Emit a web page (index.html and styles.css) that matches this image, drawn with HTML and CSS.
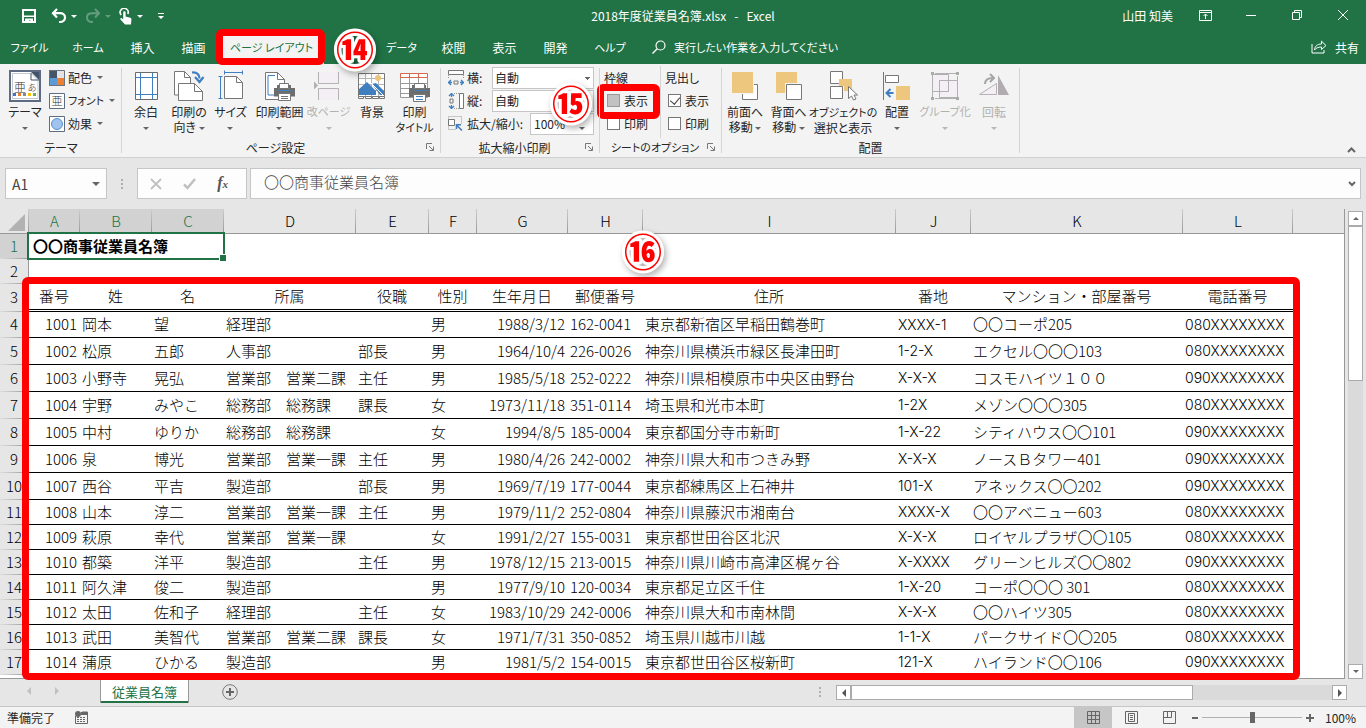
FILE: index.html
```html
<!DOCTYPE html>
<html lang="ja">
<head>
<meta charset="utf-8">
<title>2018年度従業員名簿.xlsx - Excel</title>
<link rel="stylesheet" href="styles.css">
</head>
<body>
<header class="app-head">
  <div class="titlebar">
    <div class="quick">
      <button class="qbtn" aria-label="上書き保存"><svg width="16" height="16" viewBox="0 0 16 16"><path d="M2 2h12v12H2z" fill="none" stroke="#fff" stroke-width="2"/><path d="M1 7.500h14v1.500H1zM4 10.500h8V15H9.500v-2.500H8V15H4z" fill="#fff"/></svg></button>
      <button class="qbtn" aria-label="元に戻す"><svg width="16" height="16" viewBox="0 0 16 16"><path d="M6 1L2 5.200 6 9.500M2.500 5.200H9c3 0 5 1.800 5 4.300S12 14 9 14H8" fill="none" stroke="#fff" stroke-width="2.200"/></svg></button>
      <i class="caret light"></i>
      <button class="qbtn dim" aria-label="やり直し"><svg width="16" height="16" viewBox="0 0 16 16"><path d="M10 1l4 4.200L10 9.500M13.500 5.200H7c-3 0-5 1.800-5 4.300S4 14 7 14h1" fill="none" stroke="#fff" stroke-width="2"/></svg></button>
      <i class="caret light dim"></i>
      <button class="qbtn" aria-label="タッチ/マウス モードの切り替え"><svg width="14" height="17" viewBox="0 0 14 17"><path d="M2.200 7A4 4 0 1 1 8.800 6" fill="none" stroke="#fff" stroke-width="1.600"/><path d="M4.200 4.500c0-1.800 2.400-1.800 2.400 0v4l4.600 1.300c1 .3 1.300 1 1.200 2L12 16.500H6L1.500 11.500c-.8-1 .4-2 1.300-1.300l1.400 1.200z" fill="#fff"/></svg></button>
      <i class="caret light"></i>
      <button class="qmore" aria-label="クイック アクセス ツール バーのユーザー設定"><svg width="6" height="7" viewBox="0 0 6 7"><path d="M0 0h6v1H0zM0 3h6L3 6z" fill="#fff"/></svg></button>
    </div>
    <div class="doc-title">2018年度従業員名簿.xlsx&nbsp;&nbsp; -&nbsp;&nbsp; Excel</div>
    <div class="window-side">
      <span class="user">山田 知美</span>
      <button class="wbtn" aria-label="リボンの表示オプション"><svg width="13" height="11" viewBox="0 0 13 11"><path d="M.5.5h12v10H.5zM1 2.500h11M6.500 9V4M4.500 6l2-2 2 2" fill="none" stroke="#fff"/></svg></button>
      <button class="wbtn" aria-label="最小化"><svg width="10" height="10" viewBox="0 0 10 10"><path d="M0 5.500h10" stroke="#fff"/></svg></button>
      <button class="wbtn" aria-label="元のサイズに戻す"><svg width="10" height="10" viewBox="0 0 10 10"><path d="M.5 2.500h7v7h-7zM2.500 2V.5h7v7H8" fill="none" stroke="#fff"/></svg></button>
      <button class="wbtn" aria-label="閉じる"><svg width="10" height="10" viewBox="0 0 10 10"><path d="M0 0l10 10M10 0L0 10" stroke="#fff"/></svg></button>
    </div>
  </div>
  <nav class="tabs">
    <button class="tab file kana">ファイル</button>
    <button class="tab home kana">ホーム</button>
    <button class="tab">挿入</button>
    <button class="tab">描画</button>
    <button class="tab active kana">ページ レイアウト</button>
    <button class="tab step-host" aria-label="数式"><svg class="step" width="52" height="52" viewBox="0 0 52 52"><path d="M21 12h10l-5 5zM21 40h10l-5-5z" fill="#1b5c38"/><text x="26" y="26" class="step-num">⑭</text></svg></button>
    <button class="tab data kana">データ</button>
    <button class="tab">校閲</button>
    <button class="tab">表示</button>
    <button class="tab">開発</button>
    <button class="tab home kana">ヘルプ</button>
    <button class="tab tell kana"><svg width="14" height="14" viewBox="0 0 14 14"><circle cx="8.500" cy="5.500" r="4.500" fill="none" stroke="#fff" stroke-width="1.200"/><path d="M5.200 8.800L.5 13.500" stroke="#fff" stroke-width="1.400"/></svg>実行したい作業を入力してください</button>
    <button class="tab share"><svg width="16" height="14" viewBox="0 0 16 14"><path d="M1 4v9h12v-3" fill="none" stroke="#fff"/><path d="M3.500 10c.3-3.500 2.500-6 7-6V1.200L15 5.500 10.500 9.500V7C7 7 5 8 3.500 10z" fill="none" stroke="#fff"/></svg>共有</button>
  </nav>
</header>

<section class="ribbon">
  <div class="group g-theme">
    <div class="tools">
      <button class="tool w44"><svg class="ico" width="32" height="36" viewBox="9 68 32 36"><path d="M10 71h30v30H10z" fill="#fff" stroke="#5d6c83" stroke-width="2"/><path d="M12.500 73.500H31l7 7v18H12.500z" fill="#fff" stroke="#c3c9d1"/><path d="M31 72h8v8z" fill="#44546a"/><path d="M31 73v7h8" fill="none" stroke="#44546a"/><text x="20" y="92" class="ico-a">亜</text><text x="32" y="91" class="ico-b">あ</text><path d="M13 93h3v3h-3z" fill="#4472c4"/><path d="M18 93h3v3h-3z" fill="#ed7d31"/><path d="M23 93h3v3h-3z" fill="#8a8a8a"/><path d="M28 93h3v3h-3z" fill="#ffc000"/><path d="M33 93h3v3h-3z" fill="#70ad47"/></svg><span>テーマ<br><i class="caret"></i></span></button>
      <div class="stack">
        <button class="mini"><svg width="16" height="16" viewBox="0 0 16 16"><path d="M0 0h8v8H0z" fill="#44546a"/><path d="M8 0h8v8H8z" fill="#e7e2e2"/><path d="M0 8h8v8H0z" fill="#5b9bd5"/><path d="M8 8h8v8H8z" fill="#ed7d31"/><path d="M.5.5h15v15H.5z" fill="none" stroke="#6a7480"/></svg>配色<i class="caret"></i></button>
        <button class="mini kana"><svg width="16" height="16" viewBox="0 0 16 16"><path d="M.5.5h15v15H.5z" fill="#fff" stroke="#5d6c83"/><text x="8" y="12" class="ico-c">亜</text></svg>フォント<i class="caret"></i></button>
        <button class="mini"><svg width="16" height="16" viewBox="0 0 16 16"><path d="M.5.5h15v15H.5z" fill="#fff" stroke="#5d6c83"/><circle cx="8" cy="8" r="5.500" fill="#9dc3ee" stroke="#5b8fd0"/></svg>効果<i class="caret"></i></button>
      </div>
    </div>
    <div class="group-name"><span>テーマ</span></div>
  </div>

  <div class="group g-page">
    <div class="tools">
      <button class="tool w42"><svg class="ico" width="32" height="36" viewBox="130 68 32 36"><path d="M135.500 72.500h22v27h-22z" fill="#fff" stroke="#6b6b6b"/><path d="M140.500 73v26M152.500 73v26M136 77.500h21M136 94.500h21" stroke="#3f7fc0"/></svg><span>余白<br><i class="caret"></i></span></button>
      <button class="tool w44"><svg class="ico" width="32" height="36" viewBox="173 68 32 36"><path d="M174.500 71.500h10l6 6V95h-16z" fill="#fff" stroke="#777"/><path d="M184.500 71.500v6h6" fill="none" stroke="#777"/><path d="M178.500 83.500h16l8 8v9h-24z" fill="#fff" stroke="#777"/><path d="M194.500 83.500v8h8" fill="none" stroke="#777"/><path d="M192 72.500c5-.5 7.500 2 7.500 6" fill="none" stroke="#3f7fc0" stroke-width="2.200"/><path d="M195 77l4.500 5 4-5" fill="none" stroke="#3f7fc0" stroke-width="2.200"/></svg><span>印刷の<br>向き <i class="caret"></i></span></button>
      <button class="tool w39"><svg class="ico" width="32" height="36" viewBox="215 68 32 36"><path d="M224.500 72.500h18M224.500 70.500v4M242.500 70.500v4M220.500 76.500v22M218.500 76.500h4M218.500 98.500h4" stroke="#3f7fc0"/><path d="M224.500 76.500h12l6 6v16h-18z" fill="#fff" stroke="#777"/><path d="M236.500 76.500v6h6" fill="none" stroke="#777"/></svg><span>サイズ<br><i class="caret"></i></span></button>
      <button class="tool w59"><svg class="ico" width="32" height="36" viewBox="263 68 32 36"><path d="M264.500 72.500h12l7 7v20h-19z" fill="#fff" stroke="#777"/><path d="M276.500 72.500v7h7" fill="none" stroke="#777"/><path d="M274 75.500h-7v19.500h6" fill="none" stroke="#3f7fc0"/><path d="M273 88h21v8.500h-21z" fill="#6d6d6d"/><path d="M276 85h14v5h-14z" fill="#6d6d6d"/><path d="M278.500 83.500h9v5h-9zM277.500 93.500h12v7h-12z" fill="#fff" stroke="#777"/><path d="M280 96.500h7M280 98.500h7" stroke="#777"/><path d="M276 90.500h14" stroke="#3f7fc0"/></svg><span>印刷範囲<br><i class="caret"></i></span></button>
      <button class="tool w39" disabled><svg class="ico" width="32" height="36" viewBox="312 68 32 36"><path d="M317.500 72v11.500h20V72M317.500 100V88.500h20V100" fill="#f4eef5" stroke="#b5b1b5"/><path d="M313 81.500v8l4-4z" fill="#b0b0b0"/></svg><span class="kana">改ページ<br><i class="caret"></i></span></button>
      <button class="tool w48"><svg class="ico" width="32" height="36" viewBox="357 68 32 36"><path d="M359.500 73.500h26v23h-26z" fill="#fff" stroke="#777"/><path d="M366.500 74v22M372.500 74v22M379.500 74v22M360 78.500h25M360 84.500h25M360 90.500h25" stroke="#b5b5b5"/><circle cx="379" cy="78" r="3" fill="#ecc57a"/><path d="M360 95v-6l8-7 9 9v4zM373 84l4-1 8 8v4h-4z" fill="#3f7fc0"/><path d="M372 83l12 12" stroke="#fff"/><path d="M359.500 96.500h5v2h-5zM366.500 96.500h6v2h-6zM373.500 96.500h6v2h-6zM380.500 96.500h5v2h-5z" fill="#fff" stroke="#777"/></svg><span>背景</span></button>
      <button class="tool w37"><svg class="ico" width="32" height="36" viewBox="400 68 32 36"><path d="M401.500 73.500h27v24h-27z" fill="#fff" stroke="#999"/><path d="M410.500 78v20M419.500 78v20M402 83.500h26M402 88.500h26M402 93.500h26" stroke="#999"/><path d="M401.500 73.500h27v4h-27zM410.500 73v4M419.500 73v4" fill="#fff" stroke="#d9694b"/><path d="M410 88h21v9h-21z" fill="#6d6d6d"/><path d="M413 85h14v4h-14z" fill="#6d6d6d"/><path d="M415.500 83.500h10v5h-10zM414.500 94.500h12v7h-12z" fill="#fff" stroke="#777"/><path d="M414 90.500h14M417 96.500h7M417 99.500h7" stroke="#3f7fc0"/></svg><span>印刷<br><span class="kana">タイトル</span></span></button>
    </div>
    <div class="group-name"><span>ページ設定</span><button class="launch" aria-label="ページ設定の詳細"><svg width="8" height="8" viewBox="0 0 8 8"><path d="M.5 6V.5H6M3 3l4 4M7.500 3.500v4h-4" fill="none" stroke="#777"/></svg></button></div>
  </div>

  <div class="group g-scale">
    <div class="scale-rows">
      <div class="scale-row"><svg width="16" height="16" viewBox="0 0 16 16"><path d="M.5.5h15v4H.5z" fill="#fff" stroke="#777"/><path d="M.5 5v4M15.500 5v4" stroke="#999" stroke-dasharray="1 1"/><path d="M6 11h4v3H6z" fill="none" stroke="#777"/><path d="M1 12.500h3M12 12.500h3M3 10l-2.500 2.500L3 15M13 10l2.500 2.500L13 15" fill="none" stroke="#3f7fc0" stroke-width="1.300"/></svg><label for="fitw">横:</label><select id="fitw"><option>自動</option></select></div>
      <div class="scale-row"><svg width="16" height="16" viewBox="0 0 16 16"><path d="M11.500.5h4v15h-4z" fill="#fff" stroke="#777"/><path d="M6 .5h5M6 15.500h5" stroke="#999" stroke-dasharray="1 1"/><path d="M2 6h3v4H2z" fill="none" stroke="#777"/><path d="M3.500 1v3M3.500 12v3M1 3L3.500.5 6 3M1 13l2.500 2.500L6 13" fill="none" stroke="#3f7fc0" stroke-width="1.300"/></svg><label for="fith">縦:</label><select id="fith"><option>自動</option></select></div>
      <div class="scale-row"><svg width="16" height="16" viewBox="0 0 16 16"><path d="M.5.500h13v13H.5z" fill="none" stroke="#999" stroke-dasharray="1 1"/><path d="M.5 3.500h6v6h-6z" fill="#fff" stroke="#777"/><path d="M8 8h7v7H8z" fill="#f3f3f3"/><path d="M14 14.500L9 9.500M8.500 13V8.800H13" fill="none" stroke="#3f7fc0" stroke-width="1.600"/></svg><label for="zoomp">拡大/縮小:</label><span class="spin"><input id="zoomp" type="text" value="100%"><span class="spin-arrows"><i class="caret up"></i><i class="caret"></i></span></span></div>
      <svg class="step step-15" width="52" height="52" viewBox="0 0 52 52"><text x="26" y="26" class="step-num">⑮</text></svg>
    </div>
    <div class="group-name"><span>拡大縮小印刷</span><button class="launch" aria-label="拡大縮小印刷の詳細"><svg width="8" height="8" viewBox="0 0 8 8"><path d="M.5 6V.5H6M3 3l4 4M7.500 3.500v4h-4" fill="none" stroke="#777"/></svg></button></div>
  </div>

  <div class="group g-sheet">
    <div class="sheet-opts">
      <div class="opt-col"><b>枠線</b><label class="marked"><input type="checkbox" class="pressed">表示</label><label><input type="checkbox">印刷</label></div>
      <div class="opt-col"><b>見出し</b><label><input type="checkbox" checked>表示</label><label><input type="checkbox">印刷</label></div>
    </div>
    <div class="group-name"><span class="kana">シートのオプション</span><button class="launch" aria-label="シートのオプションの詳細"><svg width="8" height="8" viewBox="0 0 8 8"><path d="M.5 6V.5H6M3 3l4 4M7.500 3.500v4h-4" fill="none" stroke="#777"/></svg></button></div>
  </div>

  <div class="group g-arrange">
    <div class="tools">
      <button class="tool w42"><svg class="ico" width="32" height="36" viewBox="731 68 32 36"><path d="M744.500 84.500h15v15h-15z" fill="#fff" stroke="#777"/><path d="M733 71h23v23h-23z" fill="#f3f3f3"/><path d="M734 72h21v21h-21z" fill="#eec77f"/></svg><span>前面へ<br>移動 <i class="caret"></i></span></button>
      <button class="tool w45"><svg class="ico" width="32" height="36" viewBox="773 68 32 36"><path d="M776 72h21v21h-21z" fill="#eec77f"/><path d="M785 83h18v18h-18z" fill="#f3f3f3"/><path d="M786.500 84.500h15v15h-15z" fill="#fff" stroke="#777"/></svg><span>背面へ<br>移動 <i class="caret"></i></span></button>
      <button class="tool w64"><svg class="ico" width="32" height="36" viewBox="827 68 32 36"><path d="M830.500 71.500h12v12h-12zM830.500 86.500h12v12h-12z" fill="#fff" stroke="#777"/><path d="M839 79h13v12h-8v-5h-5z" fill="#eec77f"/><path d="M848.500 86.500v12l3-2.500 2 4 2.500-1-2-4h3.500z" fill="#fff" stroke="#777"/></svg><span><span class="kana">オブジェクトの</span><br>選択と表示</span></button>
      <button class="tool w44"><svg class="ico" width="32" height="36" viewBox="881 68 32 36"><path d="M883.500 72v28" stroke="#777"/><path d="M885.500 75.500h13v7h-13z" fill="#fff" stroke="#777"/><path d="M896 86h14v14h-14z" fill="#eec77f"/><path d="M886.500 93h7M890.500 89l-4 4 4 4" fill="none" stroke="#3f7fc0" stroke-width="2"/></svg><span>配置<br><i class="caret"></i></span></button>
      <button class="tool w52" disabled><svg class="ico" width="32" height="36" viewBox="929 68 32 36"><path d="M935 73.500h21M935 98.500h21M932.500 76v21M957.500 76v21" fill="none" stroke="#b0b0b0"/><path d="M932.500 74.500h16v17h-16zM939.500 80.500h18v17h-18z" fill="#f4eef5" stroke="#b0b0b0"/><path d="M939.500 80.500h9v11h-9z" fill="none" stroke="#b0b0b0"/><path d="M931 72h3v3h-3zM956 72h3v3h-3zM931 97h3v3h-3zM956 97h3v3h-3z" fill="#aaa"/></svg><span class="kana">グループ化<br><i class="caret"></i></span></button>
      <button class="tool w46" disabled><svg class="ico" width="32" height="36" viewBox="978 68 32 36"><path d="M979.500 94.500h17v-11z" fill="#f4eef5" stroke="#b5b1b5"/><path d="M998 75v20h11z" fill="#b0acb0"/><path d="M985 84c0-4 3-6 8-6M990 74l4 4-4 4" fill="none" stroke="#a5a5a5" stroke-width="2"/></svg><span>回転<br><i class="caret"></i></span></button>
    </div>
    <div class="group-name"><span>配置</span></div>
  </div>
  <button class="collapse" aria-label="リボンを折りたたむ"><svg width="9" height="6" viewBox="0 0 9 6"><path d="M1 5l3.500-3.500L8 5" fill="none" stroke="#666" stroke-width="2"/></svg></button>
</section>

<section class="formula-bar">
  <div class="namebox"><input type="text" value="A1" aria-label="名前ボックス"><i class="caret"></i></div>
  <i class="dots"></i>
  <div class="fx">
    <button aria-label="キャンセル"><svg width="12" height="12" viewBox="0 0 12 12"><path d="M1 1l10 10M11 1L1 11" stroke="#c0c0c0" stroke-width="1.800"/></svg></button>
    <button aria-label="入力"><svg width="13" height="12" viewBox="0 0 13 12"><path d="M1 6.500L4.500 10 12 1" fill="none" stroke="#c0c0c0" stroke-width="2.500"/></svg></button>
    <button aria-label="関数の挿入" class="fx-name">f<small>x</small></button>
  </div>
  <div class="formula"><input type="text" value="〇〇商事従業員名簿" aria-label="数式バー"><svg width="8" height="6" viewBox="0 0 8 6"><path d="M1 1l3 3 3-3" fill="none" stroke="#666" stroke-width="2"/></svg></div>
</section>

<main class="work">
  <div class="sheet">
    <table>
      <colgroup><col class="c-n"><col class="c-a"><col class="c-b"><col class="c-b"><col class="c-d"><col class="c-e"><col class="c-f"><col class="c-g"><col class="c-h"><col class="c-i"><col class="c-h"><col class="c-k"><col class="c-l"><col></colgroup>
      <thead><tr><th class="corner"><svg width="18" height="18" viewBox="0 0 18 18"><path d="M17 0v17H0z" fill="#b2b2b2"/></svg></th><th class="sel">A</th><th class="sel">B</th><th class="sel">C</th><th>D</th><th>E</th><th>F</th><th>G</th><th>H</th><th>I</th><th>J</th><th>K</th><th>L</th><th class="rest"></th></tr></thead>
      <tbody>
      <tr class="short"><th class="sel">1</th><td colspan="3" class="cursor">〇〇商事従業員名簿</td><td colspan="10"></td></tr>
      <tr class="short"><th>2</th><td colspan="13"></td></tr>
      <tr class="names"><th>3</th><td>番号</td><td>姓</td><td>名</td><td>所属</td><td>役職</td><td>性別</td><td>生年月日</td><td>郵便番号</td><td>住所</td><td>番地</td><td>マンション・部屋番号</td><td>電話番号</td></tr>
      <tr class="row first"><th>4</th><td>1001</td><td>岡本</td><td>望</td><td>経理部</td><td></td><td>男</td><td>1988/3/12</td><td>162-0041</td><td>東京都新宿区早稲田鶴巻町</td><td>XXXX-1</td><td>〇〇コーポ205</td><td>080XXXXXXXX</td></tr>
      <tr class="row"><th>5</th><td>1002</td><td>松原</td><td>五郎</td><td>人事部</td><td>部長</td><td>男</td><td>1964/10/4</td><td>226-0026</td><td>神奈川県横浜市緑区長津田町</td><td>1-2-X</td><td>エクセル〇〇〇103</td><td>080XXXXXXXX</td></tr>
      <tr class="row"><th>6</th><td>1003</td><td>小野寺</td><td>晃弘</td><td>営業部　営業二課</td><td>主任</td><td>男</td><td>1985/5/18</td><td>252-0222</td><td>神奈川県相模原市中央区由野台</td><td>X-X-X</td><td>コスモハイツ１００</td><td>090XXXXXXXX</td></tr>
      <tr class="row"><th>7</th><td>1004</td><td>宇野</td><td>みやこ</td><td>総務部　総務課</td><td>課長</td><td>女</td><td>1973/11/18</td><td>351-0114</td><td>埼玉県和光市本町</td><td>1-2X</td><td>メゾン〇〇〇305</td><td>080XXXXXXXX</td></tr>
      <tr class="row"><th>8</th><td>1005</td><td>中村</td><td>ゆりか</td><td>総務部　総務課</td><td></td><td>女</td><td>1994/8/5</td><td>185-0004</td><td>東京都国分寺市新町</td><td>1-X-22</td><td>シティハウス〇〇101</td><td>090XXXXXXXX</td></tr>
      <tr class="row"><th>9</th><td>1006</td><td>泉</td><td>博光</td><td>営業部　営業一課</td><td>主任</td><td>男</td><td>1980/4/26</td><td>242-0002</td><td>神奈川県大和市つきみ野</td><td>X-X-X</td><td>ノースＢタワー401</td><td>090XXXXXXXX</td></tr>
      <tr class="row"><th>10</th><td>1007</td><td>西谷</td><td>平吉</td><td>製造部</td><td>部長</td><td>男</td><td>1969/7/19</td><td>177-0044</td><td>東京都練馬区上石神井</td><td>101-X</td><td>アネックス〇〇202</td><td>090XXXXXXXX</td></tr>
      <tr class="row short"><th>11</th><td>1008</td><td>山本</td><td>淳二</td><td>営業部　営業一課</td><td>主任</td><td>男</td><td>1979/11/2</td><td>252-0804</td><td>神奈川県藤沢市湘南台</td><td>XXXX-X</td><td>〇〇アベニュー603</td><td>080XXXXXXXX</td></tr>
      <tr class="row short"><th>12</th><td>1009</td><td>萩原</td><td>幸代</td><td>営業部　営業一課</td><td></td><td>女</td><td>1991/2/27</td><td>155-0031</td><td>東京都世田谷区北沢</td><td>X-X-X</td><td>ロイヤルプラザ〇〇105</td><td>080XXXXXXXX</td></tr>
      <tr class="row short"><th>13</th><td>1010</td><td>都築</td><td>洋平</td><td>製造部</td><td>主任</td><td>男</td><td>1978/12/15</td><td>213-0015</td><td>神奈川県川崎市高津区梶ヶ谷</td><td>X-XXXX</td><td>グリーンヒルズ〇〇802</td><td>090XXXXXXXX</td></tr>
      <tr class="row short"><th>14</th><td>1011</td><td>阿久津</td><td>俊二</td><td>製造部</td><td></td><td>男</td><td>1977/9/10</td><td>120-0034</td><td>東京都足立区千住</td><td>1-X-20</td><td>コーポ〇〇〇 301</td><td>080XXXXXXXX</td></tr>
      <tr class="row short"><th>15</th><td>1012</td><td>太田</td><td>佐和子</td><td>経理部</td><td>主任</td><td>女</td><td>1983/10/29</td><td>242-0006</td><td>神奈川県大和市南林間</td><td>X-X-X</td><td>〇〇ハイツ305</td><td>080XXXXXXXX</td></tr>
      <tr class="row short"><th>16</th><td>1013</td><td>武田</td><td>美智代</td><td>営業部　営業二課</td><td>課長</td><td>女</td><td>1971/7/31</td><td>350-0852</td><td>埼玉県川越市川越</td><td>1-1-X</td><td>パークサイド〇〇205</td><td>080XXXXXXXX</td></tr>
      <tr class="row short"><th>17</th><td>1014</td><td>蒲原</td><td>ひかる</td><td>製造部</td><td></td><td>男</td><td>1981/5/2</td><td>154-0015</td><td>東京都世田谷区桜新町</td><td>121-X</td><td>ハイランド〇〇106</td><td>090XXXXXXXX</td></tr>
      </tbody>
    </table>
    <div class="mark-table"></div>
    <svg class="step step-16" width="52" height="52" viewBox="0 0 52 52"><text x="26" y="26" class="step-num">⑯</text></svg>
  </div>
  <div class="vscroll">
    <button aria-label="上へ"><i class="caret up"></i></button><div class="vthumb"></div><button class="end" aria-label="下へ"><i class="caret"></i></button>
  </div>
</main>

<div class="sheetbar">
  <div class="sheet-nav"><i class="tri left"></i><i class="tri right"></i></div>
  <button class="sheet-tab">従業員名簿</button>
  <button class="add" aria-label="新しいシート"><svg width="16" height="16" viewBox="0 0 16 16"><circle cx="8" cy="8" r="7.300" fill="none" stroke="#777"/><path d="M8 4v8M4 8h8" stroke="#666" stroke-width="2"/></svg></button>
  <i class="dots push"></i>
  <div class="hscroll"><button aria-label="左へ"><i class="tri left dark"></i></button><div class="hthumb"></div><button class="end" aria-label="右へ"><i class="tri right dark"></i></button></div>
</div>

<footer class="status">
  <span>準備完了</span>
  <svg class="macro" width="13" height="13" viewBox="0 0 13 13"><path d="M.5 5v7.500h12V1H7" fill="none" stroke="#666"/><path d="M6 1h7v3H6z" fill="#666"/><circle cx="3" cy="3" r="3" fill="#666"/><path d="M2 6.500h9M2 8.500h9M2 10.500h9" stroke="#666" stroke-dasharray="2 1"/></svg>
  <div class="views">
    <button class="view on" aria-label="標準"><svg width="13" height="13" viewBox="0 0 13 13"><path d="M.5.5h12v12H.5zM4.500.500v12M8.500.500v12M.5 4.500h12M.5 8.500h12" fill="none" stroke="#666"/></svg></button>
    <button class="view" aria-label="ページ レイアウト"><svg width="13" height="13" viewBox="0 0 13 13"><path d="M.5.5h12v12H.5zM3.500 2.500h6v8h-6zM5 4.500h3M5 6.500h3M5 8.500h3" fill="none" stroke="#666"/></svg></button>
    <button class="view" aria-label="改ページ プレビュー"><svg width="13" height="13" viewBox="0 0 13 13"><path d="M.5.5h12v12H.5zM4.500.500v6M8.500.500v6M.5 6.500h8" fill="none" stroke="#666"/></svg></button>
  </div>
  <div class="zoom"><span class="minus"></span><input type="range" min="0" max="200" value="100" aria-label="ズーム"><span class="plus"></span></div>
  <span class="percent">100%</span>
</footer>
</body>
</html>
```
FILE: styles.css
```css
* { box-sizing: border-box; }
body {
  margin: 0;
  height: 100vh;
  display: flex;
  flex-direction: column;
  overflow: hidden;
  background: #e6e6e6;
  color: #262626;
  font: 12px/15px "Noto Sans CJK JP", "Noto Sans", sans-serif;
}
button, input, select {
  font: inherit;
  color: inherit;
  border: 0;
  padding: 0;
  margin: 0;
  background: none;
  border-radius: 0;
}
svg { flex: none; display: block; }
.kana { font-size: 11px; }

.caret {
  display: inline-block;
  flex: none;
  border: 3px solid transparent;
  border-top-color: #666;
  border-bottom-width: 0;
  vertical-align: middle;
}
.caret.up { border-top-width: 0; border-bottom: 3px solid #666; }
.caret.light { border-top-color: #fff; }
.dim { opacity: .3; }

/* title bar and tabs */
.app-head { background: #217346; color: #fff; }
.titlebar {
  height: 32px;
  display: grid;
  grid-template-columns: 1fr auto 1fr;
  align-items: center;
  padding-bottom: 2px;
}
.quick { display: flex; align-items: center; padding-left: 21px; padding-top: 2px; }
.quick .qbtn + .qbtn { margin-left: 14px; }
.quick .caret { margin: 0 8px 0 4px; }
.quick .qmore { margin-left: 7px; }
.window-side { display: flex; justify-content: flex-end; align-items: center; }
.user { margin-right: 9px; }
.wbtn { width: 46px; height: 30px; display: grid; place-items: center; }
.tabs {
  height: 32px;
  display: flex;
  font-feature-settings: "palt";
}
.tab { white-space: nowrap; width: 51px; padding-bottom: 2px; }
.tab.file { width: 59px; }
.tab.home { width: 58px; }
.tab.data { width: 53px; }
.tab.active {
  position: relative;
  width: 105px;
  background: #f3f3f3;
  color: #217346;
  z-index: 2;
}
.tab.active::after {
  content: "";
  position: absolute;
  inset: -3px -1px -1px -3px;
  border: 7px solid #f00;
  border-radius: 6px;
}
.tab.tell { width: auto; display: flex; align-items: center; gap: 8px; padding-left: 13px; }
.tab.share { width: auto; display: flex; align-items: center; gap: 8px; margin-left: auto; padding-right: 7px; }

/* numbered callouts */
.step-host { position: relative; z-index: 1; }
.step {
  position: absolute;
  overflow: visible;
  filter: drop-shadow(2px 3px 3px rgba(0, 0, 0, .3));
  z-index: 3;
}
.step-host .step { left: 50%; top: 50%; margin: -27px 0 0 -21px; }
.step-num {
  font: 900 38px "Noto Sans CJK JP", sans-serif;
  text-anchor: middle;
  dominant-baseline: central;
  fill: #f00;
  stroke: #fff;
  stroke-width: 6px;
  stroke-linejoin: round;
  paint-order: stroke;
}

/* ribbon */
.ribbon {
  display: flex;
  position: relative;
  background: #f3f3f3;
  border-bottom: 1px solid #d0d0d0;
  font-feature-settings: "palt";
}
.group {
  flex: none;
  display: flex;
  flex-direction: column;
  padding: 2px 3px 0;
  height: 93px;
  position: relative;
}
.group::after {
  content: "";
  position: absolute;
  right: 0;
  top: 4px;
  bottom: 4px;
  width: 1px;
  background: #d4d4d4;
}
.g-theme { width: 122px; }
.g-page { width: 319px; }
.g-scale { width: 159px; z-index: 4; }
.g-sheet { width: 122px; }
.g-arrange { width: 298px; padding-left: 2px; }
.tools, .scale-rows, .sheet-opts { height: 72px; display: flex; }
.tool {
  display: flex;
  flex-direction: column;
  align-items: center;
  flex: none;
  white-space: nowrap;
  text-align: center;
  line-height: 15px;
  padding-top: 2px;
}
.tool:disabled { color: #b1b1b1; }
.tool:disabled .caret { border-top-color: #b8b8b8; }
.w37 { width: 37px; } .w39 { width: 39px; } .w42 { width: 42px; }
.w44 { width: 44px; } .w45 { width: 45px; } .w46 { width: 46px; }
.w48 { width: 48px; } .w52 { width: 52px; } .w59 { width: 59px; }
.w64 { width: 64px; }
.ico-a, .ico-b, .ico-c { font-size: 12px; font-weight: 300; fill: #333; text-anchor: middle; }
.ico-b { font-size: 9px; }
.ico-c { font-size: 11px; }
.stack { padding-left: 2px; }
.mini { display: flex; align-items: center; height: 23px; gap: 3px; white-space: nowrap; }
.mini .caret { margin-left: 2px; }
.group-name {
  display: flex;
  align-items: center;
  height: 18px;
}
.group-name span { flex: 1; text-align: center; white-space: nowrap; }
.launch { width: 12px; }

.scale-rows { flex-direction: column; padding: 0 3px 0 4px; position: relative; }
.scale-row { display: flex; align-items: center; height: 23px; gap: 3px; }
.scale-row label { white-space: nowrap; }
.scale-row select, .spin {
  margin-left: auto;
  width: 102px;
  height: 22px;
  border: 1px solid #c6c6c6;
  background: #fff;
}
.scale-row select {
  appearance: none;
  padding-left: 2px;
  background: linear-gradient(#666, #666) 92px 9px / 5px 1px no-repeat,
    linear-gradient(#666, #666) 93px 10px / 3px 1px no-repeat,
    linear-gradient(#666, #666) 94px 11px / 1px 1px no-repeat, #fff;
}
.spin { width: 64px; display: flex; }
.spin input { width: 48px; padding-left: 3px; }
.spin-arrows { display: flex; flex-direction: column; justify-content: space-around; }
.step-15 { left: 101px; top: 9px; }

.opt-col { width: 57px; padding-left: 1px; display: flex; flex-direction: column; }
.opt-col + .opt-col { border-left: 1px solid #d4d4d4; padding-left: 4px; }
.opt-col b { font-weight: 400; line-height: 23px; }
.opt-col b, .opt-col label { height: 23px; }
.opt-col label { display: flex; align-items: center; gap: 4px; padding-left: 3px; position: relative; }
.opt-col input {
  appearance: none;
  width: 13px;
  height: 13px;
  border: 1px solid #777;
  background: #fff;
  position: relative;
}
.opt-col input:checked::after {
  content: "";
  position: absolute;
  left: 3px;
  top: 0;
  width: 5px;
  height: 8px;
  border: solid #444;
  border-width: 0 1px 1px 0;
  transform: rotate(40deg);
}
.opt-col .pressed { background: #c2c2c2; border-color: #999; }
.opt-col .marked { z-index: 1; }
.marked::after {
  content: "";
  position: absolute;
  inset: -5px 0 -7px -7px;
  border: 7px solid #f00;
  border-radius: 6px;
}
.collapse { margin: auto 10px 4px auto; }

/* formula bar */
.formula-bar {
  display: flex;
  align-items: center;
  padding: 10px 5px;
  color: #444;
}
.namebox, .fx, .formula {
  height: 31px;
  border: 1px solid #c6c6c6;
  background: #fdfdfd;
  display: flex;
  align-items: center;
}
.namebox { width: 102px; padding: 0 6px; justify-content: space-between; }
.namebox input { width: 70px; font-size: 14px; line-height: 20px; }
.namebox .caret { border-width: 4px 4px 0; }
.dots {
  width: 2px;
  height: 10px;
  margin: 0 14px;
  background: repeating-linear-gradient(#b0b0b0 0 2px, transparent 2px 4px);
}
.fx { width: 110px; justify-content: space-between; padding: 0 18px 0 12px; }
.fx button { display: block; }
.fx .fx-name { font: italic 700 16px/20px "Liberation Serif", serif; color: #555; }
.fx-name small { font-size: 11px; }
.formula { flex: 1; margin-left: 3px; padding: 0 4px 0 13px; }
.formula input { flex: 1; font-size: 15px; font-weight: 300; line-height: 22px; padding-bottom: 3px; }

/* worksheet */
.work { flex: 1; display: flex; min-height: 0; }
.sheet {
  flex: 1;
  position: relative;
  background: #fff;
  border-right: 1px solid #999;
  border-bottom: 1px solid #999;
}
table { width: 100%; table-layout: fixed; border-collapse: separate; border-spacing: 0; color: #000; }
.c-n { width: 29px; } .c-a { width: 51px; } .c-b { width: 72px; }
.c-d { width: 132px; } .c-e { width: 73px; } .c-f { width: 48px; }
.c-g { width: 91px; } .c-h { width: 75px; } .c-i { width: 253px; }
.c-k { width: 212px; } .c-l { width: 110px; }
th, td { padding: 0; height: 27px; font-weight: 300; white-space: nowrap; }
thead th {
  height: 25px;
  border-bottom: 1px solid #999;
  background: linear-gradient(#ccc, #999) right / 1px 100% no-repeat #e6e6e6;
  font: 300 15px/20px "Noto Sans CJK JP", sans-serif;
}
thead .sel { background-color: #d2d2d2; color: #217346; }
thead .rest { background: #e6e6e6; }
.corner svg { margin: 3px 0 0 8px; }
tbody th {
  background: linear-gradient(90deg, #ddd, #999) bottom / 100% 1px no-repeat #e6e6e6;
  font: 300 15px/20px "Noto Sans CJK JP", sans-serif;
  border-right: 1px solid #999;
  padding-bottom: 2px;
}
tbody th.sel { background-color: #d2d2d2; color: #217346; }
td { padding: 0 3px 1px 2px; font-size: 15px; line-height: 20px; }
.short th, .short td { height: 25px; }
.names th, .names td { height: 28px; }
.names td { text-align: center; border-bottom: 3px double #000; }
.row.first th, .row.first td { height: 26px; }
.row td { border-bottom: 1px solid #000; }
.row td:nth-child(2), .row td:nth-child(8) { text-align: right; }
.row td:nth-child(11), .row td:nth-child(13) { font-family: Inter, sans-serif; font-size: 14px; }
.row td:nth-child(11), .row td:nth-child(13) { padding-top: 1px; }
.cursor { position: relative; font-weight: 700; padding: 0 0 2px 4px; }
.cursor::before {
  content: "";
  position: absolute;
  inset: -2px -1px -1px -2px;
  border: 2px solid #217346;
}
.cursor::after {
  content: "";
  position: absolute;
  right: -2px;
  bottom: -2px;
  width: 6px;
  height: 6px;
  background: #217346;
  border: solid #fff;
  border-width: 1px 0 0 1px;
}
.mark-table {
  position: absolute;
  left: 22px;
  top: 68px;
  width: 1278px;
  bottom: -2px;
  border: 7px solid #f00;
  border-radius: 6px;
  z-index: 2;
}
.step-16 { left: 617px; top: 14px; }

.vscroll {
  width: 21px;
  padding: 2px 3px 0;
  display: flex;
  flex-direction: column;
  background: linear-gradient(#dadada, #dadada) 3px 2px / 15px 100% no-repeat;
}
.vscroll button, .hscroll button { flex: none; background: #fff; border: 1px solid #ababab; display: grid; place-items: center; }
.vscroll button { width: 15px; height: 15px; }
.vthumb { height: 155px; background: #fff; border: 1px solid #ababab; }
.vscroll .end { margin-top: auto; }

/* sheet tabs */
.sheetbar { height: 27px; display: flex; align-items: flex-start; padding-right: 19px; }
.sheet-nav { width: 100px; display: flex; gap: 24px; padding: 8px 0 0 27px; }
.tri { display: block; border: 4px solid transparent; }
.tri.left { border-right-color: #c0c0c0; border-left-width: 0; }
.tri.right { border-left-color: #c0c0c0; border-right-width: 0; }
.tri.left.dark { border-right-color: #555; }
.tri.right.dark { border-left-color: #555; }
.sheet-tab {
  height: 24px;
  width: 89px;
  background: #fff;
  color: #217346;
  font-size: 13px;
  border: 1px solid #999;
  border-width: 0 1px;
  box-shadow: inset 0 -2px #217346;
}
.add { margin: 5px 0 0 33px; }
.push { margin: 8px 15px 0 auto; }
.hscroll { width: 511px; height: 15px; margin-top: 6px; display: flex; background: #dadada; }
.hscroll button { width: 15px; height: 15px; }
.hthumb { width: 342px; background: #fff; border: 1px solid #ababab; }
.hscroll .end { margin-left: auto; }

/* status bar */
.status {
  height: 22px;
  display: flex;
  align-items: center;
  background: #f3f3f3;
  border-top: 1px solid #c6c6c6;
  padding: 0 8px 0 7px;
}
.macro { margin-left: 20px; }
.views { display: flex; margin-left: auto; height: 21px; }
.view { width: 38px; display: grid; place-items: center; }
.view.on { background: #c6c6c6; }
.zoom { display: flex; align-items: center; gap: 4px; margin-left: 4px; }
.minus, .plus { width: 8px; height: 2px; background: #666; }
.minus { width: 6px; }
.plus { height: 8px; background: linear-gradient(#666, #666) center / 8px 2px no-repeat, linear-gradient(#666, #666) center / 2px 8px no-repeat; }
.zoom input { appearance: none; width: 100px; height: 12px; background: linear-gradient(#b0b0b0, #b0b0b0) center / 100% 1px no-repeat; }
.zoom input::-webkit-slider-thumb { appearance: none; width: 5px; height: 11px; background: #666; }
.percent { margin-left: 11px; width: 33px; }
```
